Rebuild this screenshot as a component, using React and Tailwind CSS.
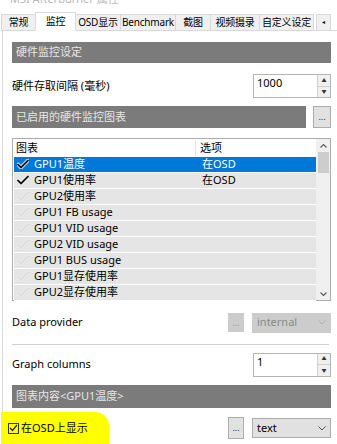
import React from 'react';

const font = { fontFamily: '"Noto Sans", "Noto Sans CJK SC", sans-serif' };

const tabs = [
    { label: '常规', w: 'w-[35px]' },
    { label: '监控', w: 'w-[41px]', active: true },
    { label: 'OSD显示', w: 'w-[46px]' },
    { label: 'Benchmark', w: 'w-[56px]' },
    { label: '截图', w: 'w-[36px]' },
    { label: '视频摄录', w: 'w-[50px]' },
    { label: '自定义设定', w: 'w-[55px]' },
];

const rows = [
    { name: 'GPU1温度', opt: '在OSD', on: true },
    { name: 'GPU1使用率', opt: '在OSD', on: true },
    { name: 'GPU2使用率' },
    { name: 'GPU1 FB usage' },
    { name: 'GPU1 VID usage' },
    { name: 'GPU2 VID usage' },
    { name: 'GPU1 BUS usage' },
    { name: 'GPU1显存使用率' },
    { name: 'GPU2显存使用率' },
];

function Check({ on }) {
    return (
        <svg width="12" height="10" viewBox="0 0 12 10" className="shrink-0">
            <path
                d="M1 5.5 L4 8.5 L11 1.5"
                fill="none"
                stroke={on ? '#ffffff' : '#ececec'}
                strokeWidth={on ? 3.6 : 2.6}
                strokeLinecap="round"
                strokeLinejoin="round"
            />
            <path
                d="M1 5.5 L4 8.5 L11 1.5"
                fill="none"
                stroke={on ? '#1a1a1a' : '#cbcbcb'}
                strokeWidth={on ? 1.8 : 1}
                strokeLinecap="round"
                strokeLinejoin="round"
            />
        </svg>
    );
}

function Header({ children, className = '' }) {
    return (
        <div className={`bg-[#7b7b7b] text-[#e6e6e6] text-[11px] flex items-center px-[4px] ${className}`}>
            {children}
        </div>
    );
}

function Spin({ value }) {
    return (
        <div className="flex w-[78px] h-[24px] border border-[#b5b5b5] bg-white">
            <div className="flex-1 text-[11px] text-black px-[3px] pt-[1px] leading-[14px]">{value}</div>
            <div className="w-[13px] flex flex-col border-l border-[#d0d0d0] bg-[#f0f0f0]">
                <div className="flex-1 flex items-center justify-center text-[5px] text-[#333] border-b border-[#d0d0d0]">▲</div>
                <div className="flex-1 flex items-center justify-center text-[5px] text-[#333]">▼</div>
            </div>
        </div>
    );
}

function Dots({ disabled, className = '' }) {
    return (
        <div
            className={`w-[16px] flex items-center justify-center text-[9px] border ${
                disabled ? 'bg-[#cccccc] border-[#cccccc] text-[#999]' : 'bg-[#e1e1e1] border-[#adadad] text-[#333]'
            } ${className}`}
        >
            ...
        </div>
    );
}

function Select({ value, disabled }) {
    return (
        <div
            className={`w-[79px] h-[20px] flex items-center justify-between px-[4px] text-[11px] border ${
                disabled ? 'bg-[#cccccc] border-[#cccccc] text-[#8a8a8a]' : 'bg-[#e1e1e1] border-[#adadad] text-black'
            }`}
        >
            <span>{value}</span>
            <svg width="8" height="5" viewBox="0 0 8 5">
                <path d="M0.5 0.5 L4 4 L7.5 0.5" fill="none" stroke={disabled ? '#b0b0b0' : '#555'} strokeWidth="1" />
            </svg>
        </div>
    );
}

export default function App() {
    return (
        <div className="w-[337px] h-[444px] overflow-hidden bg-white relative" style={font}>
            <div className="h-[6px] overflow-hidden">
                <div className="text-[11px] text-[#b8b8b8] -mt-[9px] ml-[10px] whitespace-nowrap">MSI Afterburner 属性</div>
            </div>
            {/* tabs */}
            <div className="flex items-end h-[25px] pl-[2px]">
                {tabs.map((t) => (
                    <div
                        key={t.label}
                        className={`${t.w} flex items-center justify-center text-[10px] tracking-[-0.2px] whitespace-nowrap text-black border border-[#d9d9d9] -ml-px ${
                            t.active ? 'h-[19px] bg-white border-b-white z-10 relative' : 'h-[17px] bg-[#f0f0f0]'
                        }`}
                    >
                        {t.label}
                    </div>
                ))}
                <div className="ml-[2px] w-[15px] h-[17px] border border-[#d9d9d9] bg-[#f0f0f0] flex items-center justify-center text-[6px] text-black">
                    ◂
                </div>
            </div>
            {/* panel */}
            <div className="ml-[2px] border-l border-t border-[#d9d9d9] -mt-px h-[420px] pl-[9px] pr-[6px] pt-[11px] flex flex-col">
                <Header className="h-[21px] shrink-0">硬件监控设定</Header>

                <div className="flex items-center justify-between mt-[10px] h-[26px] shrink-0">
                    <span className="text-[11px] text-black">硬件存取间隔 (毫秒)</span>
                    <Spin value="1000" />
                </div>

                <div className="flex mt-[7px] h-[22px] shrink-0">
                    <Header className="flex-1">已启用的硬件监控图表</Header>
                    <Dots className="ml-[7px] h-[22px] w-[18px]" />
                </div>

                {/* list */}
                <div className="mt-[10px] h-[163px] border border-[#acacac] flex bg-white shrink-0">
                    <div className="flex-1 flex flex-col pl-[1px] pt-[1px]">
                        <div className="flex h-[18px] text-[11px] text-black items-center">
                            <div className="w-[182px] pl-[2px] border-r border-[#e5e5e5] h-full flex items-center">图表</div>
                            <div className="pl-[4px]">选项</div>
                        </div>
                        {rows.map((r, i) => {
                            const sel = i === 0;
                            return (
                                <div
                                    key={r.name}
                                    className={`flex h-[16px] items-center text-[11px] border-b border-white ${
                                        sel ? 'bg-[#0078d7] text-white' : 'bg-[#e5e5e5] text-black'
                                    }`}
                                >
                                    <div className="w-[18px] flex justify-center">
                                        <Check on={r.on} />
                                    </div>
                                    <div className="w-[170px] pl-[2px]">{r.name}</div>
                                    <div>{r.opt}</div>
                                </div>
                            );
                        })}
                    </div>
                    <div className="w-[14px] bg-[#f0f0f0] flex flex-col items-center">
                        <div className="h-[13px] flex items-center">
                            <svg width="7" height="4" viewBox="0 0 7 4">
                                <path d="M0.5 3.5 L3.5 0.5 L6.5 3.5" fill="none" stroke="#606060" strokeWidth="1.2" />
                            </svg>
                        </div>
                        <div className="w-[11px] h-[21px] bg-[#cdcdcd]" />
                        <div className="flex-1" />
                        <div className="h-[13px] flex items-center">
                            <svg width="7" height="4" viewBox="0 0 7 4">
                                <path d="M0.5 0.5 L3.5 3.5 L6.5 0.5" fill="none" stroke="#606060" strokeWidth="1.2" />
                            </svg>
                        </div>
                    </div>
                </div>

                <div className="flex items-center mt-[12px] h-[19px] shrink-0">
                    <span className="flex-1 text-[11px] text-black">Data provider</span>
                    <Dots disabled className="h-[19px] w-[14px]" />
                    <div className="ml-[8px]">
                        <Select value="internal" disabled />
                    </div>
                </div>

                <div className="mt-[12px] mr-[2px] h-px bg-[#d0d0d0] shrink-0" />

                <div className="flex items-center justify-between mt-[8px] h-[23px] shrink-0">
                    <span className="text-[11px] text-black">Graph columns</span>
                    <Spin value="1" />
                </div>

                <Header className="h-[23px] mt-[9px] shrink-0">图表内容&lt;GPU1温度&gt;</Header>

                <div className="flex items-center mt-[9px] h-[22px] relative shrink-0">
                    <div className="absolute -left-[11px] -top-[5px] w-[108px] h-[40px] bg-[#ffff00] rounded-tr-[14px] rounded-br-[8px]" />
                    <div className="relative flex items-center flex-1 -ml-[4px]">
                        <div className="w-[11px] h-[11px] border border-[#333] flex items-center justify-center">
                            <svg width="9" height="8" viewBox="0 0 9 8">
                                <path d="M1 4 L3.5 6.5 L8 1" fill="none" stroke="#222" strokeWidth="1.2" />
                            </svg>
                        </div>
                        <span className="ml-[2px] text-[11px] text-black">在OSD上显示</span>
                    </div>
                    <Dots className="h-[22px] w-[15px] relative" />
                    <div className="ml-[8px]">
                        <Select value="text" />
                    </div>
                </div>
            </div>
        </div>
    );
}
